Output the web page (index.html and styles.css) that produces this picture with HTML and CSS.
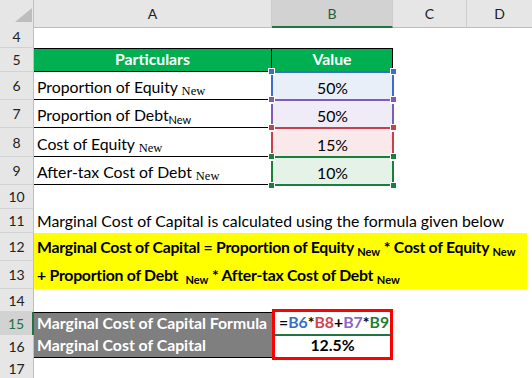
FILE: index.html
```html
<!DOCTYPE html>
<html lang="en">

<head>
    <meta charset="UTF-8">
    <title>Marginal Cost of Capital</title>
    <link rel="stylesheet" href="styles.css">
</head>

<body>
    <div class="sheet">
        <!-- column letters -->
        <div class="row colhead">
            <div class="corner">
                <svg width="33" height="24" viewBox="0 0 33 24"><polygon points="32,8 32,22 15,22" fill="#bdbdbd" /></svg>
            </div>
            <div class="ch">A</div>
            <div class="ch sel">B</div>
            <div class="ch">C</div>
            <div class="ch">D</div>
        </div>

        <div class="row h23">
            <div class="rh">4</div>
            <div class="c"></div><div class="c"></div><div class="c"></div><div class="c"></div>
        </div>

        <div class="row h24">
            <div class="rh">5</div>
            <div class="c head first">Particulars</div>
            <div class="c head">Value</div>
            <div class="c"></div><div class="c"></div>
        </div>

        <div class="row h28">
            <div class="rh">6</div>
            <div class="c item"><span>Proportion of Equity <span class="sub serif">New</span></span></div>
            <div class="c val ref blue">50%</div>
            <div class="c"></div><div class="c"></div>
        </div>

        <div class="row h28">
            <div class="rh">7</div>
            <div class="c item"><span>Proportion of Debt<span class="sub">New</span></span></div>
            <div class="c val ref purple">50%</div>
            <div class="c"></div><div class="c"></div>
        </div>

        <div class="row h29">
            <div class="rh">8</div>
            <div class="c item"><span>Cost of Equity <span class="sub serif">New</span></span></div>
            <div class="c val ref red">15%</div>
            <div class="c"></div><div class="c"></div>
        </div>

        <div class="row h28">
            <div class="rh">9</div>
            <div class="c item"><span>After-tax Cost of Debt <span class="sub serif">New</span></span></div>
            <div class="c val ref green">10%</div>
            <div class="c"></div><div class="c"></div>
        </div>

        <div class="row h24">
            <div class="rh">10</div>
            <div class="c"></div><div class="c"></div><div class="c"></div><div class="c"></div>
        </div>

        <div class="row h24">
            <div class="rh">11</div>
            <div class="c span">Marginal Cost of Capital is calculated using the formula given below</div>
        </div>

        <div class="row h28">
            <div class="rh">12</div>
            <div class="c span note"><span>Marginal Cost of Capital = Proportion of Equity <span class="sub">New</span> * Cost of Equity <span class="sub">New</span></span></div>
        </div>

        <div class="row h28">
            <div class="rh">13</div>
            <div class="c span note"><span>+ Proportion of Debt &nbsp;<span class="sub">New</span> * After-tax Cost of Debt <span class="sub">New</span></span></div>
        </div>

        <div class="row h23">
            <div class="rh">14</div>
            <div class="c"></div><div class="c"></div><div class="c"></div><div class="c"></div>
        </div>

        <div class="row h23">
            <div class="rh active">15</div>
            <div class="c label">Marginal Cost of Capital Formula</div>
            <div class="c editing">
                <span class="f-op">=</span><span class="f-b6">B6</span><span class="f-op">*</span><span class="f-b8">B8</span><span class="f-op">+</span><span class="f-b7">B7</span><span class="f-op">*</span><span class="f-b9">B9</span><span class="caret"></span>
            </div>
            <div class="c"></div><div class="c"></div>
        </div>

        <div class="row h22">
            <div class="rh">16</div>
            <div class="c label last">Marginal Cost of Capital</div>
            <div class="c result">12.5%</div>
            <div class="c"></div><div class="c"></div>
        </div>

        <div class="row h24">
            <div class="rh">17</div>
            <div class="c"></div><div class="c"></div><div class="c"></div><div class="c"></div>
        </div>
    </div>
</body>

</html>
```

FILE: styles.css
```css
* {
    margin: 0;
    padding: 0;
    box-sizing: border-box;
}

body {
    font-family: Lato, "Liberation Sans", sans-serif;
    font-size: 15.8px;
    color: #000;
    background: #fff;
    overflow: hidden;
}

.sheet {
    width: 532px;
}

.row {
    display: grid;
    grid-template-columns: 34px 238px 121px 74px 1fr;
}

.h22 { height: 22px; }
.h23 { height: 23px; }
.h24 { height: 24px; }
.h28 { height: 28px; }
.h29 { height: 29px; }

/* headers */
.colhead {
    height: 25px;
}

.corner,
.ch {
    background: #e6e6e6;
    border-bottom: 1px solid #bdbdbd;
}

.corner {
    border-right: 1px solid #bfbfbf;
}

.ch {
    display: flex;
    align-items: center;
    justify-content: center;
    font-size: 14px;
    color: #222;
    border-right: 1px solid #cdcdcd;
}

.ch:last-child {
    border-right: none;
}

.ch.sel {
    background: #d2d2d2;
    color: #1d5e3a;
    border-bottom: 2px solid #217346;
}

.rh {
    display: flex;
    align-items: center;
    justify-content: center;
    background: #e6e6e6;
    border-right: 1px solid #bfbfbf;
    border-bottom: 1px solid #d2d2d2;
    font-size: 14px;
    color: #222;
}

.rh.active {
    background: #d2d2d2;
    color: #217346;
    border-right: 2px solid #217346;
}

/* cells */
.c {
    position: relative;
    display: flex;
    align-items: flex-end;
    line-height: 20px;
    padding: 0 3px 2px;
    white-space: nowrap;
}

.span {
    grid-column: 2 / -1;
}

.head {
    justify-content: center;
    background: #00b050;
    color: #fff;
    font-weight: 700;
    border-top: 1px solid #000;
    border-right: 1px solid #000;
    border-bottom: 1px solid #000;
}

.item {
    border-bottom: 1px solid #000;
}

.val {
    justify-content: center;
}

.sub {
    font-size: 11px;
    line-height: 0;
    vertical-align: -3px;
}

.serif {
    font-family: "Liberation Serif", serif;
    font-size: 12.5px;
    vertical-align: -2px;
}

.note {
    background: #ffff00;
    font-weight: 700;
    letter-spacing: -0.25px;
    margin-right: 5px;
    padding-bottom: 4px;
}

.note .sub {
    font-weight: 700;
    letter-spacing: 0;
}

/* range references picked up by the formula */
.ref::before {
    content: "";
    position: absolute;
    inset: -1px;
    border: 2px solid var(--ref);
    z-index: 1;
}

.ref::after {
    content: "";
    position: absolute;
    inset: -4px;
    z-index: 2;
    background:
        linear-gradient(var(--ref), var(--ref)) 1px 1px / 5px 5px no-repeat,
        linear-gradient(var(--ref), var(--ref)) calc(100% - 1px) 1px / 5px 5px no-repeat,
        linear-gradient(var(--ref), var(--ref)) 1px calc(100% - 1px) / 5px 5px no-repeat,
        linear-gradient(var(--ref), var(--ref)) calc(100% - 1px) calc(100% - 1px) / 5px 5px no-repeat,
        linear-gradient(#fff, #fff) left top / 7px 7px no-repeat,
        linear-gradient(#fff, #fff) right top / 7px 7px no-repeat,
        linear-gradient(#fff, #fff) left bottom / 7px 7px no-repeat,
        linear-gradient(#fff, #fff) right bottom / 7px 7px no-repeat;
}

.blue { --ref: #3b6fc7; background: #e8eff9; }
.purple { --ref: #7f5cb7; background: #f0ecf7; }
.red { --ref: #c9404d; background: #fae9ea; }
.green { --ref: #17803a; background: #e5f2e7; }

/* result block */
.label {
    background: #7f7f7f;
    color: #fff;
    font-weight: 700;
    border-top: 1px solid #000;
    border-bottom: 1px solid #000;
}

.label.last {
    border-top: none;
}

.editing,
.result {
    font-weight: 700;
    border-left: 3px solid #ff0000;
    border-right: 3px solid #ff0000;
}

.editing {
    padding-left: 4px;
    border-top: 3px solid #ff0000;
    border-bottom: 2px solid #217346;
    margin-top: -3px;
}

.result {
    justify-content: center;
    border-bottom: 3px solid #ff0000;
    margin-bottom: -2px;
}

.f-op { color: #000; }
.f-b6 { color: #3b6fc7; }
.f-b8 { color: #d1424f; }
.f-b7 { color: #8a68c4; }
.f-b9 { color: #1e7e34; }

.caret {
    width: 1px;
    height: 20px;
    margin-left: 2px;
    background: #000;
}
```
